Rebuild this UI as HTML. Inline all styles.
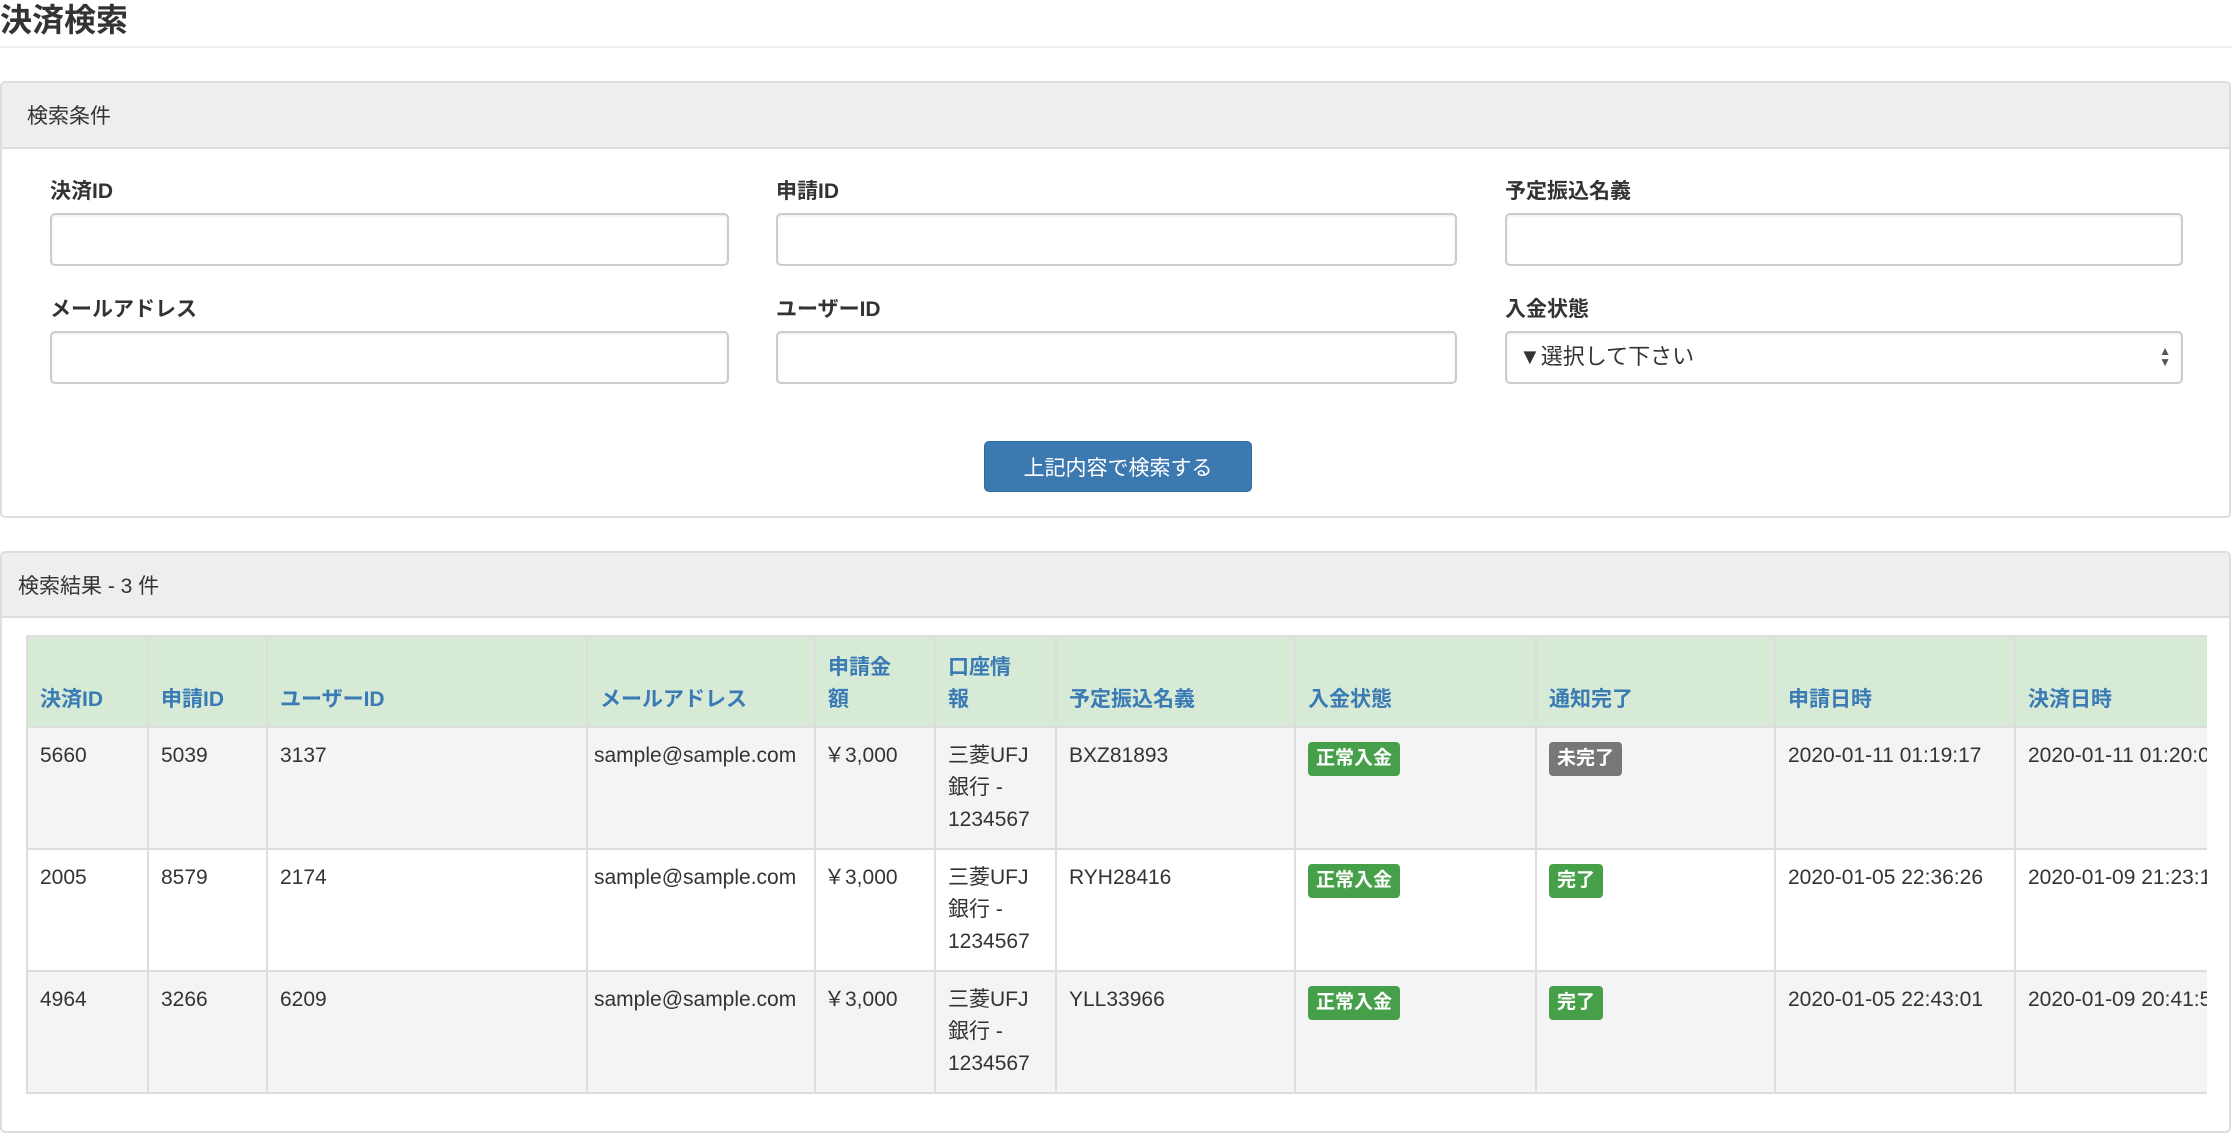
<!DOCTYPE html>
<html><head><meta charset="utf-8"><style>
*{box-sizing:border-box;margin:0;padding:0}
body{width:2232px;height:1140px;overflow:hidden;background:#fff;font-family:"Liberation Sans","Noto Sans CJK JP",sans-serif;color:#333;font-size:21px}
h1{position:absolute;left:0;top:0;font-size:32px;font-weight:bold;line-height:40px}
.hr{position:absolute;left:0;top:46px;width:2232px;height:2px;background:#eee}
.panel{position:absolute;left:0;width:2231px;border:2px solid #ddd;border-radius:5px;background:#fff;overflow:hidden}
.ph{background:#eee;border-bottom:2px solid #ddd;font-size:21px;display:flex;align-items:center}
.lbl{position:absolute;font-weight:bold;font-size:21px}
.inp{position:absolute;height:53px;border:2px solid #ccc;border-radius:5px;background:#fff;box-shadow:inset 0 1px 2px rgba(0,0,0,.08)}
.btn{position:absolute;left:982px;top:358px;width:268px;height:51px;background:#3d79b1;border:1px solid #2e6da4;border-radius:5px;color:#fff;font-size:21px;display:flex;align-items:center;justify-content:center}
.tw{position:absolute;left:24px;top:82px;width:2181px;overflow:hidden}
table{border-collapse:collapse;table-layout:fixed;width:2230px;font-size:21px}
td,th{border:2px solid #ddd;padding:12px 12px;vertical-align:top;line-height:32px;text-align:left}
th{background:#d6ead5;color:#3a7ab5;font-weight:bold;vertical-align:bottom;height:91px;padding-bottom:10px}
tr.o td{background:#f4f4f4}
td{height:122px}
.b{display:inline-block;color:#fff;font-weight:bold;font-size:19px;line-height:26px;padding:4px 8px;border-radius:4px;background:#46a049;margin-top:2px}
.g{background:#777}
</style></head><body>
<h1>決済検索</h1>
<div class="hr"></div>
<div class="panel" style="top:81px;height:437px">
 <div class="ph" style="height:66px;padding-left:25px">検索条件</div>
 <div class="lbl" style="left:48px;top:92px">決済ID</div>
 <div class="lbl" style="left:774px;top:92px">申請ID</div>
 <div class="lbl" style="left:1503px;top:92px">予定振込名義</div>
 <div class="inp" style="left:48px;top:130px;width:679px"></div>
 <div class="inp" style="left:774px;top:130px;width:681px"></div>
 <div class="inp" style="left:1503px;top:130px;width:678px"></div>
 <div class="lbl" style="left:48px;top:210px">メールアドレス</div>
 <div class="lbl" style="left:774px;top:210px">ユーザーID</div>
 <div class="lbl" style="left:1503px;top:210px">入金状態</div>
 <div class="inp" style="left:48px;top:248px;width:679px"></div>
 <div class="inp" style="left:774px;top:248px;width:681px"></div>
 <div class="inp" style="left:1503px;top:248px;width:678px;padding-left:12px;line-height:47px;font-size:22px">▼選択して下さい<span style="position:absolute;right:10px;top:0;font-size:12px;line-height:11px;padding-top:13px;color:#555">▲<br>▼</span></div>
 <div class="btn">上記内容で検索する</div>
</div>
<div class="panel" style="top:551px;height:582px">
 <div class="ph" style="height:65px;padding-left:16px">検索結果 - 3 件</div>
 <div class="tw"><table>
 <colgroup><col style="width:121px"><col style="width:119px"><col style="width:320px"><col style="width:228px"><col style="width:120px"><col style="width:121px"><col style="width:239px"><col style="width:241px"><col style="width:239px"><col style="width:240px"><col style="width:242px"></colgroup>
 <tr><th>決済ID</th><th>申請ID</th><th>ユーザーID</th><th style="padding-left:12px">メールアドレス</th><th>申請金<br>額</th><th>口座情<br>報</th><th>予定振込名義</th><th>入金状態</th><th>通知完了</th><th>申請日時</th><th>決済日時</th></tr>
 <tr class="o"><td>5660</td><td>5039</td><td>3137</td><td style="padding-left:6px;padding-right:0">sample@sample.com</td><td style="padding-left:8px">￥3,000</td><td>三菱UFJ銀行 - 1234567</td><td>BXZ81893</td><td><span class="b">正常入金</span></td><td><span class="b g">未完了</span></td><td>2020-01-11 01:19:17</td><td style="white-space:nowrap">2020-01-11 01:20:05</td></tr>
 <tr><td>2005</td><td>8579</td><td>2174</td><td style="padding-left:6px;padding-right:0">sample@sample.com</td><td style="padding-left:8px">￥3,000</td><td>三菱UFJ銀行 - 1234567</td><td>RYH28416</td><td><span class="b">正常入金</span></td><td><span class="b">完了</span></td><td>2020-01-05 22:36:26</td><td style="white-space:nowrap">2020-01-09 21:23:11</td></tr>
 <tr class="o"><td>4964</td><td>3266</td><td>6209</td><td style="padding-left:6px;padding-right:0">sample@sample.com</td><td style="padding-left:8px">￥3,000</td><td>三菱UFJ銀行 - 1234567</td><td>YLL33966</td><td><span class="b">正常入金</span></td><td><span class="b">完了</span></td><td>2020-01-05 22:43:01</td><td style="white-space:nowrap">2020-01-09 20:41:52</td></tr>
 </table></div>
</div>
</body></html>
